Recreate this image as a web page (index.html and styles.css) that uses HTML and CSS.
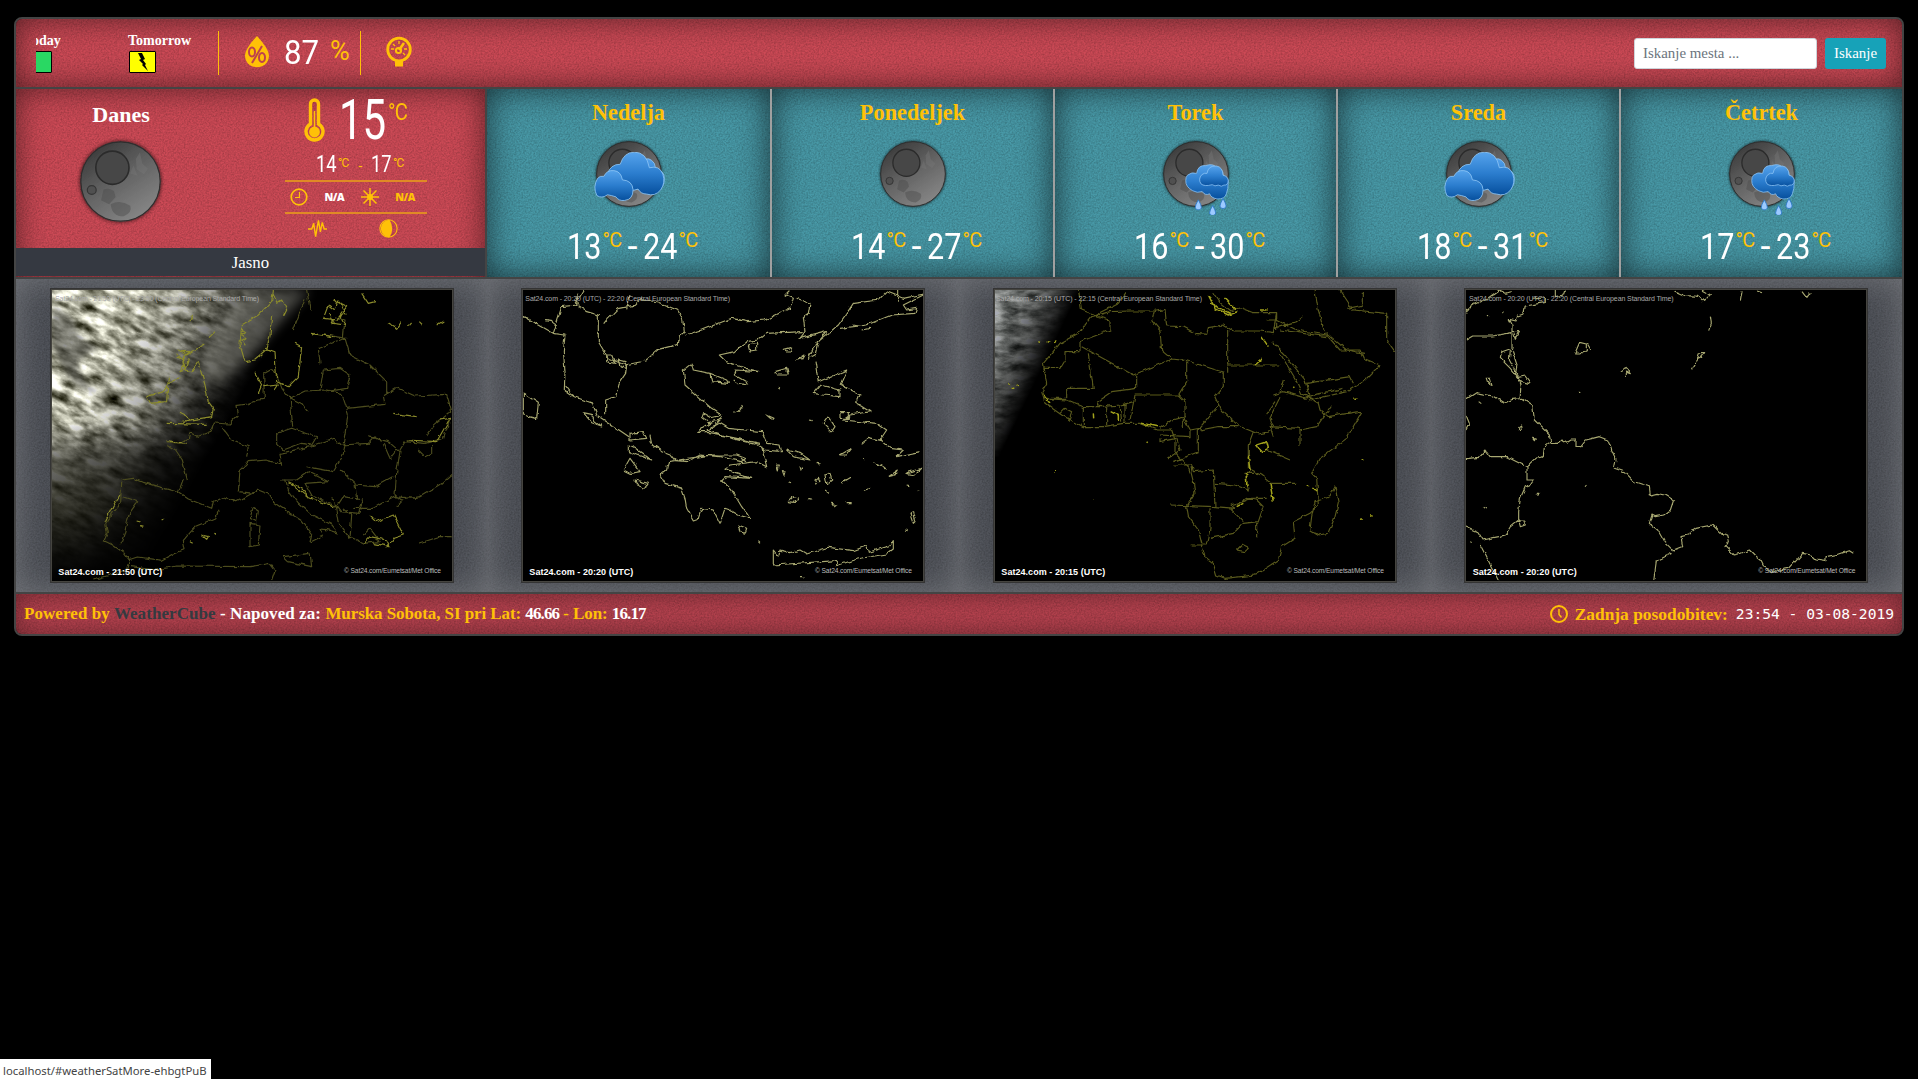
FILE: index.html
```html
<!DOCTYPE html>
<html lang="sl">
<head>
<meta charset="utf-8">
<title>WeatherCube</title>
<link rel="stylesheet" href="styles.css">
</head>
<body>
<svg class="defs" aria-hidden="true">
  <defs>
    <linearGradient id="moonBody" x1="0.15" y1="0" x2="0.8" y2="1">
      <stop offset="0" stop-color="#363636"/><stop offset=".5" stop-color="#646464"/><stop offset="1" stop-color="#8a8a8a"/>
    </linearGradient>
    <linearGradient id="cloudFill" x1="0" y1="0" x2="0" y2="1">
      <stop offset="0" stop-color="#56a3ec"/><stop offset=".5" stop-color="#2b7dce"/><stop offset="1" stop-color="#064f9d"/>
    </linearGradient>
    <filter id="moonShade" x="-20%" y="-20%" width="140%" height="140%"><feDropShadow dx="0" dy="0" stdDeviation="2.6" flood-color="#000" flood-opacity=".8"/></filter>
    <filter id="rough" x="-5%" y="-5%" width="110%" height="110%">
      <feTurbulence type="fractalNoise" baseFrequency=".05" numOctaves="2" seed="4" result="n"/>
      <feDisplacementMap in="SourceGraphic" in2="n" scale="13" xChannelSelector="R" yChannelSelector="G"/>
    </filter>
    <filter id="clouds" x="0" y="0" width="100%" height="100%" color-interpolation-filters="sRGB">
      <feTurbulence type="fractalNoise" baseFrequency=".016 .036" numOctaves="6" seed="11" result="n"/>
      <feColorMatrix in="n" type="matrix" values="1.3 .9 0 0 -.4  1.3 .9 0 0 -.4  1.3 .9 0 0 -.47  0 0 0 0 1" result="c"/>
      <feComposite in="c" in2="SourceGraphic" operator="in"/>
    </filter>
    <linearGradient id="dusk1" gradientUnits="userSpaceOnUse" x1="330" y1="240" x2="690" y2="440">
      <stop offset="0" stop-color="#fff"/><stop offset=".42" stop-color="#aaa"/><stop offset=".75" stop-color="#333"/><stop offset="1" stop-color="#000"/>
    </linearGradient>
    <linearGradient id="dusk3" gradientUnits="userSpaceOnUse" x1="120" y1="160" x2="275" y2="235">
      <stop offset="0" stop-color="#ccc"/><stop offset=".5" stop-color="#777"/><stop offset="1" stop-color="#000"/>
    </linearGradient>
    <linearGradient id="low1" x1="0" y1="0" x2="0" y2="1"><stop offset=".45" stop-color="#000" stop-opacity="0"/><stop offset=".58" stop-color="#22221c" stop-opacity=".62"/><stop offset=".75" stop-color="#111108" stop-opacity=".75"/><stop offset="1" stop-color="#000"/></linearGradient>
    <mask id="night1" maskUnits="userSpaceOnUse" x="156" y="60" width="1200" height="873"><rect x="156" y="60" width="1200" height="873" fill="url(#dusk1)"/></mask>
    <mask id="night3" maskUnits="userSpaceOnUse" x="105" y="60" width="1200" height="873"><rect x="105" y="60" width="1200" height="873" fill="url(#dusk3)"/></mask>
    <symbol id="moon" viewBox="0 0 100 100" overflow="visible">
      <g filter="url(#moonShade)"><circle cx="50" cy="50" r="49" fill="url(#moonBody)" stroke="#2e2e2e" stroke-width="1.5"/></g>
      <circle cx="40" cy="33" r="20.5" fill="#474747" stroke="#2b2b2b" stroke-width="2"/>
      <circle cx="14.500" cy="60.500" r="5.500" fill="#505050" stroke="#353535" stroke-width="1.500"/>
      <path d="M29 60q8-3 13 2l2 7-8 9-10-5zM38 78q12-6 24 2 3 8-8 13-15 0-16-15z" fill="#4b4b4b" opacity=".45"/>
      <path d="M69 22l5-8 3 14 7 6-5 7-9-6zM62 40l4-10 5 13z" fill="#777" opacity=".4"/>
    </symbol>
    <symbol id="cloudy" viewBox="0 0 100 70">
      <g fill="url(#cloudFill)" stroke="#8cc4f5" stroke-width="1.200">
        <path d="M68 12q10-7 17 4l2 8q13 2 12 14 1 8-6 14H60z"/>
        <path d="M19 31q4-14 18-14 5-17 20-17 17 0 21 22 14-4 19 9 4 12-3 22-8 10-20 6-8 0-12-7-12 5-20-4-12 1-16-7z"/>
        <path d="M5 37q3-4 9-3 4-9 14-8 10 1 12 13 14 1 15 14 0 14-12 15-8 1-12-5-6-2-12-3-8 6-15 1-6-12 1-24z"/>
      </g>
    </symbol>
    <symbol id="rainy" viewBox="0 0 100 120">
      <g fill="url(#cloudFill)" stroke="#8cc4f5" stroke-width="1.800">
        <path d="M5 28q10-8 21-4 3-20 21-18 16-6 25 4 16 3 15 19 14 4 12 18 0 12-4 23-3 14-22 13-14-3-17-12-10 5-17-5-12 4-22-2-17-9-16-24 0-8 4-12z"/>
        <path d="M38 27q6-5 12-3 3-19 22-17 14 2 15 21 12 3 12 13-1 11-10 10-5 5-13 0-8 4-14-1-18 5-26-2-7-11 2-21z"/>
      </g>
      <path id="drop" d="M30 85q-7 12-7 17c0 8 14 8 14 0q0-5-7-17z" fill="#9ccaff" stroke="#2a77c9" stroke-width="2"/>
      <use href="#drop" x="33" y="13"/><use href="#drop" x="57" y="-3"/>
    </symbol>
  </defs>
</svg>

<main class="widget">
  <header class="bar topbar felt">
    <div class="alerts">
      <div class="alert"><b>Today</b><span class="flag green"></span></div>
      <div class="alert"><b>Tomorrow</b><span class="flag yellow"><svg viewBox="0 0 12 20"><path d="M1 1h4l3 6-2 1 3 4-1 1 3 6-6-6 1-1-4-4 2-1z" fill="#000"/></svg></span></div>
    </div>
    <div class="humidity">
      <svg class="drop" viewBox="0 0 26 33"><path d="M13 1Q1 14 1 20.500C1 36 25 36 25 20.500Q25 14 13 1z" fill="#ffc107"/><g fill="none" stroke="#bd424d" stroke-width="2"><ellipse cx="8" cy="17" rx="3" ry="4.500"/><ellipse cx="18" cy="22.500" rx="3" ry="4.500"/><path d="M18 11L8 28"/></g></svg>
      <span class="lcd lcd-md">87</span><span class="pct">%</span>
    </div>
    <svg class="gauge" viewBox="0 0 26 31"><circle cx="13" cy="13.500" r="11.300" fill="none" stroke="#ffc107" stroke-width="2.800"/><path d="M9 25h8v5.500H9z" fill="#ffc107"/><path d="M13 14l5-7" stroke="#ffc107" stroke-width="2.500"/><circle cx="12.500" cy="14.500" r="2.600" fill="none" stroke="#ffc107" stroke-width="2"/><path d="M5 13h3M18 13h3M13 5v3M7 8l2 2M17 17l2 2" stroke="#ffc107" stroke-width="1.300"/></svg>
    <form class="search"><input type="text" placeholder="Iskanje mesta ..."><button type="button">Iskanje</button></form>
  </header>

  <section class="forecast">
    <article class="today felt">
      <div class="today-body">
        <div class="today-left"><h2>Danes</h2><svg class="moon-lg"><use href="#moon"/></svg></div>
        <div class="today-right">
          <div class="now">
            <svg class="thermo" viewBox="0 0 21 44"><path d="M6.500 26V6a4 4 0 0 1 8 0v20a8.500 8.500 0 1 1-8 0z" fill="none" stroke="#ffc107" stroke-width="3.400"/><path d="M10.500 13v22" stroke="#ffc107" stroke-width="1.500"/><circle cx="10.500" cy="34" r="5.400" fill="#ffc107"/></svg>
            <span class="lcd lcd-lg">15</span><span class="unit">°C</span>
          </div>
          <div class="range"><span class="lcd lcd-sm">14</span><i>°C</i><em>-</em><span class="lcd lcd-sm">17</span><i>°C</i></div>
          <div class="facts">
            <svg viewBox="0 0 18 18"><circle cx="9" cy="9" r="7.800" fill="none" stroke="#ffc107" stroke-width="1.700"/><path d="M9.500 4v5.500H5" fill="none" stroke="#ffc107" stroke-width="1.200"/></svg>
            <b>N/A</b>
            <svg viewBox="0 0 18 18"><path d="M9 0v18M0 9h18M2.500 2.500l13 13M15.500 2.500l-13 13" stroke="#ffc107" stroke-width="1.500"/><circle cx="9" cy="9" r="3" fill="#ffc107"/></svg>
            <b class="gold">N/A</b>
          </div>
          <div class="extras">
            <svg viewBox="0 0 20 19"><path d="M0 10h4l2-6 2 14 3-17 2 12 2-10 2 7h3" fill="none" stroke="#ffc107" stroke-width="1.500"/></svg>
            <svg viewBox="0 0 18 18"><circle cx="9" cy="9" r="8.200" fill="none" stroke="#ffc107" stroke-width="1"/><path d="M10 .7a8.300 8.300 0 1 0 0 16.600q5-8 0-16.600z" fill="#ffc107"/></svg>
          </div>
        </div>
      </div>
      <p class="summary">Jasno</p>
    </article>
    <article class="day felt"><h3>Nedelja</h3><div class="sky"><svg class="moon-sm"><use href="#moon"/></svg><svg class="cloudy"><use href="#cloudy"/></svg></div><div class="temps"><span class="lcd">13</span><i>°C</i><em>-</em><span class="lcd">24</span><i>°C</i></div></article>
    <article class="day felt"><h3>Ponedeljek</h3><div class="sky"><svg class="moon-sm"><use href="#moon"/></svg></div><div class="temps"><span class="lcd">14</span><i>°C</i><em>-</em><span class="lcd">27</span><i>°C</i></div></article>
    <article class="day felt"><h3>Torek</h3><div class="sky"><svg class="moon-sm"><use href="#moon"/></svg><svg class="rainy"><use href="#rainy"/></svg></div><div class="temps"><span class="lcd">16</span><i>°C</i><em>-</em><span class="lcd">30</span><i>°C</i></div></article>
    <article class="day felt"><h3>Sreda</h3><div class="sky"><svg class="moon-sm"><use href="#moon"/></svg><svg class="cloudy"><use href="#cloudy"/></svg></div><div class="temps"><span class="lcd">18</span><i>°C</i><em>-</em><span class="lcd">31</span><i>°C</i></div></article>
    <article class="day felt"><h3>Četrtek</h3><div class="sky"><svg class="moon-sm"><use href="#moon"/></svg><svg class="rainy"><use href="#rainy"/></svg></div><div class="temps"><span class="lcd">17</span><i>°C</i><em>-</em><span class="lcd">23</span><i>°C</i></div></article>
  </section>

  <section class="satellites">
    <div class="sat felt">
      <svg class="map" viewBox="156 60 1200 873">
        <rect x="156" y="60" width="1200" height="873" fill="#000"/>
        <g mask="url(#night1)"><g transform="rotate(24 500 400)"><rect x="-100" y="-250" width="1300" height="1500" fill="#fff" filter="url(#clouds)"/></g><rect x="156" y="60" width="1200" height="873" fill="url(#low1)"/><path d="M156 110q60 20 70 60t70 60l-60 40q-10 50 60 100-70-10-100-70-40-60-40-100z" fill="#3a3a36" opacity=".55" class="swirl"/></g>
        <path d="M600 320Q620 190 730 60H930L760 250L650 350z" fill="#c8c8bb" opacity=".33" class="glow"/>
        <g class="coast" filter="url(#rough)">
          <path d="M500 515l40 5 25-15 5-18 25 12 38-15 10-25 45 3 25-25-5-30 35-5 30-12 20-2-2-80 22-12 18 20 15 40 20 25 40 20 15 22M502 525l25 15 20 30 15 60M365 630l35-5 30 12 105 30 30 20 70 28 5-20 25-12 45 12 65-35 30 12 15 25 45 30 40 25 30 40-5 25 20-10 20-10-10-20 20 2 35 10-20-25-60-30-40-35-30-40-8-30M535 667l15-40M365 635l-3 60-45 65 5 30-10 22 25 12 35 25 15 20 25-8 75 10 35-20 30-12-5-25 40-45 60-25 10-25M368 680l45 15-25 35-15 60-10 30M390 865l-10 35-100 30M390 890l80 10 60-12 220 2 60-10 15 20-10 30M850 860l80-10 5 40-70-15zM760 710l15 10-5 35-20-10zM750 760l30 5-5 60-25 5z"/>
          <path d="M715 605l30-30 50-5 50 12M845 590l-5-40 90-20 70-25 25 20 80-5 20-20M830 490l45-15 75 25-15 25-30-5-55 20-20-20zM870 380l8 90M870 385l45-22 65-3 45 10 20 60-15 90M1040 415l115-12-5-25 40-25 55 25 95-5 15 50-50 40-25 35M960 360l10-60 50-5 30 20-10 40-60 10M960 280l-5-45 80-30 15 50 60 30 50 50v35M1030 205l5-55-30-10M930 120l-10-60M880 180l35-95M940 190l100 15M1105 500l60 15 35 30-10 60-5 70 20 15 55-10 60-35 40-35M1200 540l15-25 60 5 55-15 20-60M1065 645l60 5 55-30M1020 600l45 40 5 50M920 590l80 15 30-50 5-35M840 630l50 0 35-25 60 30-70 5 20 35 50 25 25 10 20-30 60 10-15 40-50-5-30-40M1005 700l10 60 35 45 5-70-25-20M1060 715l60 0 60-35 70 5M1050 800l40 20 50-5-30-40-20 20M720 600l-5 65 50 5M740 560l5-30-50-20-30-40M1255 820l60-20 40 0M1190 710l15-15M1255 540l20 20 20-10v-25M1150 520l20 45 20-25"/>
        </g>
        <g class="coast bright" filter="url(#rough)">
          <path d="M725 165l50-30 40-40 5-35M725 170l-5 55 15 50 30-5 35-30 10-45 5-60M722 180l12 8-10 8 14 10-12 8 10 15M535 240l25 15 50-30M530 265l35 5-10 30 20 5 20-30 20 70 10 50 15 20-5 25-90 15M530 250l25 30-15 25 15-5-5-40 20-15-25 0M440 380l50-15 25-35 30-8M440 380l10 20 50-5 5-75M500 460l120 3M540 430l40 20M500 512l60 8M795 235l30 10 5 90 35 15 30-30 10-90-20-10M765 305l20 40-10 25M790 350l45-5-10 15M930 190l70 10M870 640l50 40 80 30M865 635l40 20 20 30M1090 820l20-20 50 10 10 20-50-10M1110 735l20 20 50-20 30 60-30 10-20 30M1220 510l90 5 40-70-30 5M1000 90l40 20-30 40-40-5 15-40M985 105l20 15 10-30 20 40-15 10 15 25-35-5-15-30M1165 160l25 15 15-20M1225 170l8-10M1258 155l10 10M1310 165l20-12M1180 430l70 10M630 200l15-15M820 70l10 30 15-10 15 30-10 20M315 755l25-50 20-30M1085 70l20 30 20-5M570 150l8-15M410 750l12 3M420 770l8 2M485 750l5-3M605 795l20 5-5 8zM640 790l10 3M570 815l8 5"/>
        </g>
        <text class="sat-zone" x="165" y="92" textLength="612">Sat24.com - 21:50 (UTC) - 23:50 (Central European Standard Time)</text>
        <text class="sat-time" x="175" y="915" textLength="312">Sat24.com - 21:50 (UTC)</text>
        <text class="sat-copy" x="1032" y="909" textLength="291">© Sat24.com/Eumetsat/Met Office</text>
      </svg>
    </div>
    <div class="sat felt">
      <svg class="map" viewBox="129 60 1200 873">
        <rect x="129" y="60" width="1200" height="873" fill="#000"/>
        <g class="coast pale" filter="url(#rough)">
          <path d="M130 138l90 52 35 5-5 50 5 60-2 55 30 20 55 20 12 35 30 20 45 30 22 15M220 190l25-80 45-5 30 20 35 10 0 80 30 50 50 20 60-12 40-35 60-15 3-25 15-12-5-40-15-25-60-25-50-10-20 20-50 10-30 30-12 15M285 105l30-50M290 68l5 35M440 118l10-40M615 195l50-15 90-35 45 10 55-5 75-35 10-30-25-10 30-30M950 85l40 15-5 30-15 10 5 45-15 20 80-20-40 50-15 30 20-10 10-40 60-50 25-35 20-30 75-10 25-25 50 20 70-15-70 35 10 15 30-5-5 15-70 5-75 30-80 10M1253 60v35M968 185l-110 5-25 20-30 5-25 15-15 15-45 10 20 20 60 20 40 10-70-5-5 15 35 20 5 10-30-5-15-10M690 310l50 20 5 10-50-5zM690 310l-50-10-5-20-25 20 5 45 45 40 35 30 30 20-30 8-25-15-5 15 20 15 40-10M690 460l-40 25 45 0 60 20 80 20 20 15 50 5-5-20-40-5-15-35-50-5-50-5-25-15-30 10-5 20 60 10 95 20M845 530l15 60-30-15-80 10-15 10 30 15 50 15-80-5-10 10 30 30 30 50 25 35-35-10-25-15-15-5-15 45-20-40-35-5-10 30-15 5-20-35-5-30-10-30-50-15-15-25 20-15 5-25 60-10 70-10 75 0 25 10-15 10-60-15-60-5-35 20-40-3-15-20-25-10-30-20-5-25M440 285l-3 25-20 30-10 40-30 10 0 40M310 428l25 5 10 20 20 15-30-10zM380 255l15 0 10 25-25-5zM415 270l20 5 5 20-20-5zM450 490l40-5 10 20-50 5zM445 525l20 10 50 35-70-25zM430 600l20-35 30 40-30 5zM465 630l40 10-10 15-25-10zM130 370l45 30-5 45-40-10zM775 765l25 10-5 15-15-5zM880 885l0-45 15 20 5-20 30 8 30-8 20 12 65-20 75 10 40-15 5 20 65-20 10-15 0 25-20 15-90 15-60 20 0-15zM1005 275l10 60 85-35-20 45 60 30-10 25 40 25-60 10-20 15 100 10 30 20-20 30 30 25 40 5-20 20 70-15M1000 370l20-25 60 15 0 20-50-5zM1030 460l15-20 20 30-10 15zM1080 425l25 0 0 20-25 0zM1145 520l20-15 40 10M1080 555l35-20-15 20zM920 540l40 10 30 20-50-10zM1225 620l30-20-10 15zM1275 610l50-15-20 20zM805 225l25-5 0 20-20 3zM910 238l20-5 5 10-15 0zM950 270l25-15-5 10zM885 305l35-10 5 20-35 0z"/>
          <path d="M1005 630l10-8 5 12-12 6zM1035 615l15-5 5 20-15 12zM890 585l8 0-3 15zM907 605l8 2-3 12zM925 635l8 3M960 590l8 5-4 8zM925 695l15-15 15 5-10 12zM1055 700l15 5-8 6zM1035 660l10 8M1010 580l12 2M985 688l12 3M1290 730l10 30 5-5-8-30zM1275 780l8 2M860 435l22 10-5 5zM760 430l20-10 10-15M990 450l8 2M895 355l5 2M1085 640l25-15M1155 660l15-5M1180 575l30 15 10 8M1100 698l12 0M780 565l15 10M835 815l5 5M1280 645l8 2M1310 665l8-2M1150 565l4 5M960 920l10 0M1120 165l15 3M1145 180l25-5M130 140l15 5M195 152l20 3 15 12M255 345l15 20M680 480l20-10 25-30"/>
        </g>
        <text class="sat-zone" x="136" y="92" textLength="614">Sat24.com - 20:20 (UTC) - 22:20 (Central European Standard Time)</text>
        <text class="sat-time" x="148" y="915" textLength="312">Sat24.com - 20:20 (UTC)</text>
        <text class="sat-copy" x="1005" y="909" textLength="291">© Sat24.com/Eumetsat/Met Office</text>
      </svg>
    </div>
    <div class="sat felt">
      <svg class="map" viewBox="105 60 1200 873">
        <rect x="105" y="60" width="1200" height="873" fill="#000"/>
        <g mask="url(#night3)"><rect x="105" y="60" width="400" height="500" fill="#fff" filter="url(#clouds)"/><rect x="105" y="60" width="400" height="500" fill="#50608a" opacity=".25"/></g>
        <g class="coast africa" filter="url(#rough)">
          <path d="M395 140l55-15 60-2 80 0 25-5 5 50 50 2 35 20 35 3 5-20 45-8 30 18 80 0 40 5 10-60-70 0-40-15-30 10-30-25-20-30M395 140l-40 50-55 30-50 60 10 60-15 25 10 35 50 35 65 35 60 0 60-10 50 0 50 20 45 0 10 30 0 40 45 45 10 40 5 35-25 40 5 30 30 40 20 80 25 20 10 35 25 10 90-10 70-45 10-40 40-25-5-50 50-25 25-25-5-80-15-15 25-45 80-60 45-80-10 0-90 15-25-20-5-20-50-30-20-45-45-75M935 215l40 40 60 75 15 60 110-25 50-30 50-50-50-20-10-25-60 0-40-45-90-15-60-30-30 0M1100 190l60 50 55 10M1075 120l-10-60M1075 120l20 70M960 180l140 20M940 175l70-20 20-15M950 130l0 50M1140 60l40 60 100 10 0 80 25 35M1165 115l45-10 0-40M400 135l50 15 0 30-90 35 0 30-45 0 0 25-15 25-50 0M365 230l155 85 115-48-30-25-5-60-25-30 10-35M385 250l15 105-80 0 0 30-60 0M530 315l0 40-75 10-45 30 5 15 70-5 35-10M635 267l45 5 110 35 0 45-25 30 20 40 50 45 60 25 25-5 20-15-10-30 30-60M803 180l0 125M803 285l155 0M680 275l0 60-25 40-130 0-15 75M655 375l20 20 0 45-40 10-35 25M670 445l20 35 30-5 25-30 30-40M670 440l0 35M600 495l90 5 0-20M715 480l0 65-75 30M720 480l55-10 60 0M600 505l0 10 50-10 10 35-35 25M640 585l55 0 5 20 60-5 5 110 60 5-15-10 40-10 25-10 45 0M765 640l60 5 40 15-10-50 30 0M880 485l-15 40 0 70 40 20 25 20M940 500l-10-30 90 5 0 55M920 540l70 30M1020 480l50-10 45-65M930 640l80 0M630 705l135 5M750 715l0 60-12 50M750 805l70-15 30-30 45-5 15-45-20-20-30-5-30 20M810 715l40 40M740 825l-45 0M890 760l0 45M830 840l15-15 20 10-10 10zM370 410l0 55M440 405l0 60M480 405l5 50M495 400l0 55M300 430l15-15 20 10-10 30M250 385l70 5 50 20 60 0M355 60l10 60 40 15 70-35 20-30M1125 650l-15 30-45 15-10 45-5 40 25 15 30-5 20-50 10-40zM940 375l30-10 70 20M960 365l10-35M915 435l30-40M1040 340l130-20 10 20M1040 380l110-25"/>
          <path class="hot" d="M745 75l20 40 40 20 30-10M790 80l40 40M250 375l20 25M455 425l20 10 0 15M890 525l30-10 5 20-20 10zM885 285l22-18M830 710l20-10M865 560l5 45M930 640l10 55M860 610l0 40M545 460l50 10M400 430l1 15M750 100l60 30M905 200l20 30M1000 350l3 3M235 215l5 2M260 215l8 2M285 215l8-5M145 340l5 3M155 355l5 0M170 345l4 2M900 120l20 0M1180 385l12 0M1040 645l8 2M1060 655l12 4M1205 568l5 3M1200 748l12-2M1230 738l8 0M398 690l3 0M285 605l3 0M560 515l3 3"/>
        </g>
        <text class="sat-zone" x="108" y="92" textLength="618">Sat24.com - 20:15 (UTC) - 22:15 (Central European Standard Time)</text>
        <text class="sat-time" x="124" y="915" textLength="312">Sat24.com - 20:15 (UTC)</text>
        <text class="sat-copy" x="981" y="909" textLength="291">© Sat24.com/Eumetsat/Met Office</text>
      </svg>
    </div>
    <div class="sat felt">
      <svg class="map" viewBox="107 60 1200 873">
        <rect x="107" y="60" width="1200" height="873" fill="#000"/>
        <g class="coast pale" filter="url(#rough)">
          <path d="M107 120l20-15 45-20 35-25 20 10 15-5M107 130l10-15M107 210l20-12 60 0 58-10 0-25-8-15 20 5 5-15 15-5 5-25 60-10 0-15-35 5M245 185l20 0-10 20-5-15M245 190l0 45-30 10-5 20 30 30 20 25 25-5 15 20-5 5-20-5-20-20 5-30-15-45M240 240l-3 30 25 45 10 30-3 40M107 388l30-20 50 10 35 22 25-12 30-3 30 20 5 45 20 20 25 25 5 25 20 0 10-10 15 10 15-10 15 0 0 20 15 0 15-20 20-5 20-5 25 10 10 25 15 35-5 25 30 10 30 30 45 15 3 25 20-5 25 5 25 15-10 30-20 15-25 5-10-5-8 25 25 20 20 35 20 20 10 5 25-10-5-30 20-5 25-20 50-10 25 25 20 5 5 20-10 15 25 25 20-5 25-10 15 15 20 15 10 20 25 20 20-10 30-5 40-45 25 5 15 15 30 5 0-15 40-8 30-10 12 8M362 515l-20 15-3 30-25 5-25 25-60-30-50 0-15-20-20 22-50 5M290 590l0 40 20 0-10 15-15 5-15 35-5 40 0 25-25 20-15 25-20 5-50 10-15-25-35-15M150 825l55 108M670 933l8-60 50-25M265 750l15 0 5 15-15 5zM107 435l10 25-10 20M170 325l10 0 5 20-10-5zM265 470l6-5 2 12-8 2zM310 505l8 2-3 5zM318 670l8 0-3 6zM433 252l15-35 20 5 0 20-20 10zM470 220l12 20M570 305l15-12 15 15-15-5 0 15M783 298l15-25 10-25 15 0-10 12-10 5-15 25M840 140l3 20-8 22M730 62l35 15 40 2 15 15 20-20-15-8-10-5M930 95l5-30M980 60l15 5M1115 62l15 20 10-15M445 363l5 3M463 645l3 5M160 712l10 5M145 395l8 6M170 135l6 5M216 127l4 3M120 815l4 3M375 60l0 20 25-5 5-15"/>
        </g>
        <text class="sat-zone" x="116" y="92" textLength="614">Sat24.com - 20:20 (UTC) - 22:20 (Central European Standard Time)</text>
        <text class="sat-time" x="127" y="915" textLength="312">Sat24.com - 20:20 (UTC)</text>
        <text class="sat-copy" x="984" y="909" textLength="291">© Sat24.com/Eumetsat/Met Office</text>
      </svg>
    </div>
  </section>

  <footer class="bar footer felt">
    <p class="credit"><span class="lead"><span>Powered by</span> <a>WeatherCube</a> <b>- Napoved za:</b> </span><span>Murska Sobota, SI pri Lat:</span> <b class="num">46.66</b> <span>- Lon:</span> <b class="num">16.17</b></p>
    <p class="updated"><svg viewBox="0 0 18 18"><circle cx="9" cy="9" r="8" fill="none" stroke="#ffc107" stroke-width="2"/><path d="M9 4v5.500l2.500 3" fill="none" stroke="#ffc107" stroke-width="1.500"/></svg><span>Zadnja posodobitev:</span><time>23:54 - 03-08-2019</time></p>
  </footer>
</main>
<div class="status">localhost/#weatherSatMore-ehbgtPuB</div>
</body>
</html>
```
FILE: styles.css
```css
* { box-sizing: border-box; }
body {
  margin: 0;
  min-height: 1079px;
  padding: 17px 14px 0;
  background: #000;
  color: #fff;
  font-family: "Liberation Serif", serif;
  display: flex;
  flex-direction: column;
}
h2, h3, p { margin: 0; }
i, em { font-style: normal; }
svg { display: block; flex: none; }
.defs { position: absolute; width: 0; height: 0; }

.widget {
  width: 1890px;
  border: 2px solid #444;
  border-radius: 8px;
  overflow: hidden;
}
.felt {
  background-image: url("data:image/svg+xml,%3Csvg xmlns='http://www.w3.org/2000/svg' width='160' height='160'%3E%3Cfilter id='n'%3E%3CfeTurbulence type='fractalNoise' baseFrequency='.6' numOctaves='2' stitchTiles='stitch'/%3E%3CfeColorMatrix values='0 0 0 0 0 0 0 0 0 0 0 0 0 0 0 .28 .24 0 0 -.19'/%3E%3C/filter%3E%3Crect width='160' height='160' filter='url(%23n)'/%3E%3C/svg%3E");
}
.bar { display: flex; align-items: center; background-color: #cd4a56; }

/* top bar */
.topbar {
  height: 70px;
  padding: 0 16px 0 20px;
  border-bottom: 2px solid #444;
  box-shadow: inset 0 0 30px rgba(0, 0, 0, .55);
}
.alerts {
  display: flex;
  align-items: center;
  justify-content: flex-start;
  width: 183px;
  height: 44px;
  overflow: hidden;
  border-right: 1px solid #ffc107;
}
.alert { flex: none; width: 104px; margin-left: -12px; font-size: 14px; line-height: 16px; }
.alert + .alert { margin-left: 0; }
.alert b { display: block; }
.flag { display: flex; width: 27px; height: 22px; margin: 2px 0 0 1px; border: 1px solid #000; border-radius: 1px; justify-content: center; }
.green { background: #29d863; }
.yellow { background: #ff0; }
.flag svg { width: 12px; height: 20px; }
.humidity {
  display: flex;
  align-items: center;
  width: 142px;
  height: 44px;
  padding-left: 25px;
  border-right: 1px solid #ffc107;
}
.drop { width: 26px; height: 33px; margin-top: -4px; }
.lcd { flex: none; font-family: Roboto, sans-serif; font-weight: 400; color: #fff; transform: scaleX(.85); transform-origin: left; }
.lcd-md { width: 36px; margin: -3px 0 0 14px; font-size: 34px; line-height: 40px; transform: scaleX(.92); }
.pct { margin: -4px 0 0 10px; color: #ffc107; font: 27px/30px Roboto, sans-serif; }
.gauge { width: 26px; height: 31px; margin: -3px 0 0 25px; }
.search { display: flex; gap: 8px; margin: 1px 0 0 auto; }
.search input, .search button { height: 31px; border-radius: 3px; font: 14.9px "Liberation Serif", serif; }
.search input { width: 183px; padding: 0 8px; background: #fff; border: 1px solid #ced4da; }
.search input::placeholder { color: #6c757d; opacity: 1; }
.search button { width: 61px; padding: 0; border: 0; background: #17a2b8; color: #fff; }

/* forecast row */
.forecast {
  display: grid;
  grid-template-columns: 471px 285px 283px 283px 283px 1fr;
  height: 190px;
  border-bottom: 2px solid #444;
}
.today {
  border-right: 2px solid #444;
  background-color: #cd4a56;
  box-shadow: inset 0 0 30px rgba(0, 0, 0, .55);
}
.today-body { display: flex; height: 159px; }
.today-left { width: 210px; display: flex; flex-direction: column; align-items: center; padding-top: 13px; }
.today-left h2 { font-size: 22px; line-height: 26px; }
.moon-lg { width: 81px; height: 81px; margin-top: 13px; margin-right: 2px; overflow: visible; }
.today-right { width: 142px; margin-left: 59px; }
.now { display: flex; height: 60px; padding: 9px 0 0 19px; }
.thermo { width: 21px; height: 44px; }
.lcd-lg { width: 47px; margin: -6px 0 0 14px; font-size: 56px; line-height: 56px; transform: scaleX(.75); }
.unit { width: 25px; margin: 2px 0 0 2px; color: #ffc107; font: 24px/24px Roboto, sans-serif; letter-spacing: -1px; transform: scaleX(.84); transform-origin: left; }
.range { display: flex; height: 31px; margin-top: 2px; padding-left: 31px; border-bottom: 2px solid #e08a25; }
.lcd-sm { width: 22px; font-size: 24px; line-height: 27px; transform: scaleX(.76); }
.range i { color: #ffc107; font: 12px/14px Roboto, sans-serif; letter-spacing: -1px; margin-top: 5px; width: 12px; }
.range em { color: #ffc107; font: 14px/30px Roboto, sans-serif; width: 21px; text-align: center; }
.facts { display: flex; align-items: center; justify-content: space-between; height: 32px; padding: 0 12px 0 5px; border-bottom: 2px solid #e08a25; }
.facts svg { width: 18px; height: 18px; }
.facts b { font: 800 10.5px/14px "Open Sans", sans-serif; letter-spacing: -.4px; }
.facts .gold { color: #ffc107; }
.extras { display: flex; align-items: center; justify-content: space-between; padding: 5px 29px 0 23px; }
.extras svg { width: 19px; height: 19px; }
.summary { height: 28px; padding-top: 1px; background: #353941; text-align: center; font-size: 16.8px; line-height: 28px; }

.day {
  display: flex;
  flex-direction: column;
  align-items: center;
  border-right: 2px solid #a0a0a0;
  background-color: #4899a7;
  box-shadow: inset 0 0 32px rgba(0, 0, 0, .65);
}
.day:last-child { border-right: 0; }
.day h3 { margin-top: 11px; color: #ffc107; font-size: 22.3px; line-height: 26px; }
.sky { position: relative; width: 66px; height: 66px; margin-top: 15px; }
.moon-sm { width: 66px; height: 66px; overflow: visible; }
.cloudy { position: absolute; left: -2px; top: 11px; width: 71px; height: 50px; }
.rainy { position: absolute; left: 21px; top: 22px; width: 46px; height: 52px; }
.temps { display: flex; margin-top: 19px; padding-left: 8px; height: 36px; }
.temps .lcd { width: 36px; font-size: 36px; line-height: 42px; }
.temps i { color: #ffc107; font: 20px/22px Roboto, sans-serif; letter-spacing: -.8px; margin-top: 3px; width: 20px; }
.temps em { width: 20px; text-align: center; font: 400 36px/42px Roboto, sans-serif; }

/* satellite pictures */
.satellites { display: grid; grid-template-columns: repeat(4, 1fr); height: 315px; border-bottom: 2px solid #444; }
.sat { display: flex; justify-content: center; padding-top: 9px; background-color: #4f5259; box-shadow: inset 0 0 34px rgba(150, 152, 155, .55); }
.map { width: 404px; height: 295px; border: 2px solid #45443f; outline: 1px solid #343434; outline-offset: -1px; background: #000; }
.glow { filter: blur(18px); }
.swirl { filter: blur(8px); }
.coast { fill: none; stroke: #4d4d1e; stroke-width: 3.400; stroke-linejoin: round; }
.coast.bright { stroke: #8b8b2c; }
.coast.pale { stroke: #a8a871; }
.coast.africa { stroke: #5a5a1c; }
.hot { stroke: #a3a31c; stroke-width: 4.500; }
.map text { font-family: "Liberation Sans", sans-serif; }
.sat-zone { font-size: 21px; fill: #aaa; }
.sat-time { font-size: 27px; font-weight: bold; fill: #fff; }
.sat-copy { font-size: 20px; fill: #bbb; }

/* footer */
.footer { height: 40px; padding: 0 8px; justify-content: space-between; background-color: #b94350; box-shadow: inset 0 0 26px rgba(0, 0, 0, .42); }
.credit { color: #ffc107; font-weight: bold; font-size: 17px; letter-spacing: -.08px; }
.credit .lead { letter-spacing: .07px; }
.credit b { color: #fff; }
.credit .num { letter-spacing: -.9px; }
.credit a { color: #343a40; }
.updated { display: flex; align-items: center; color: #ffc107; font-weight: bold; font-size: 17.4px; }
.updated svg { width: 18px; height: 18px; margin-right: 7px; }
.updated time { margin: -2px 0 0 8px; color: #fff; font: 14.600px "DejaVu Sans Mono", monospace; }

.status {
  align-self: flex-start;
  width: 211px;
  height: 20px;
  margin: auto 0 0 -14px;
  padding-left: 3px;
  background: #fff;
  color: #444;
  font: 11.3px/23px "Noto Sans", sans-serif;
  white-space: nowrap;
}
```
